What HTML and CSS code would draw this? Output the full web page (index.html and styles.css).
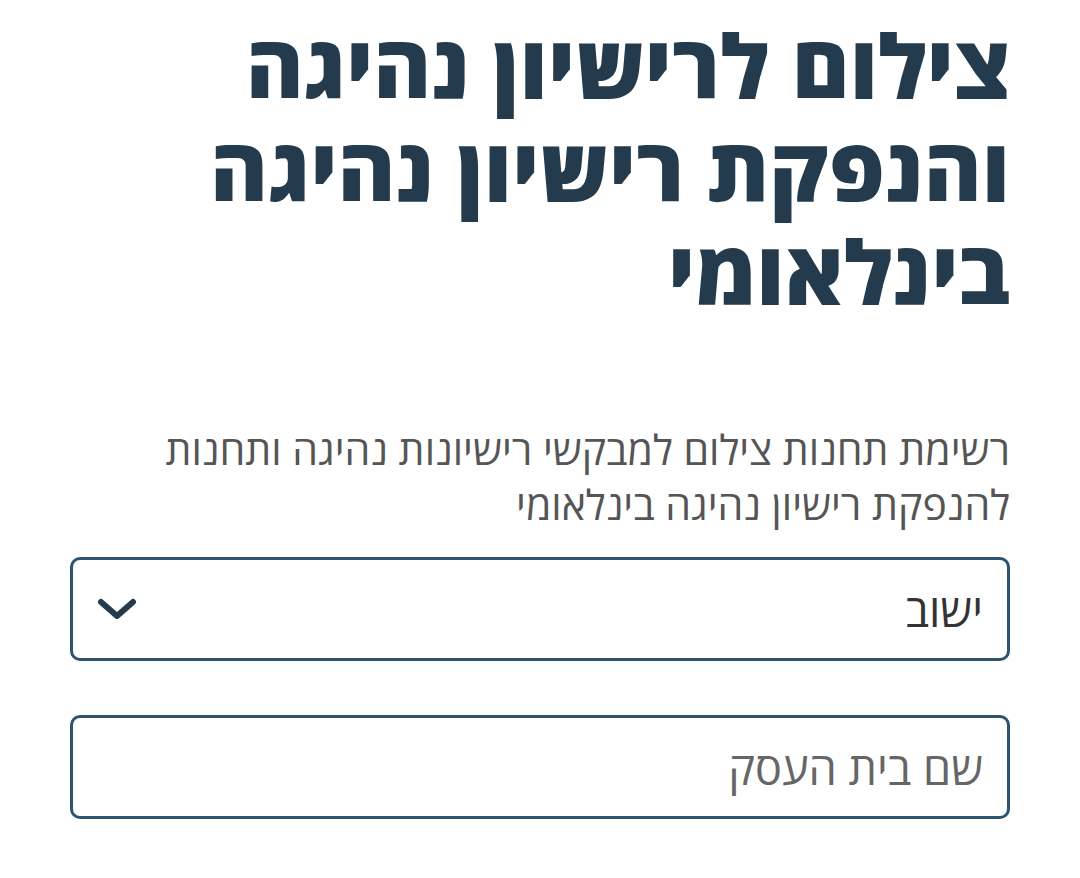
FILE: index.html
```html
<!DOCTYPE html>
<html lang="he" dir="rtl">

<head>
    <meta charset="UTF-8">
    <meta name="viewport" content="width=device-width, initial-scale=1.0">
    <title>צילום לרישיון נהיגה</title>
    <link rel="stylesheet" href="styles.css">
</head>

<body>
    <div class="page">
        <h1 class="title">צילום לרישיון נהיגה והנפקת רישיון נהיגה בינלאומי</h1>
        <p class="intro">רשימת תחנות צילום למבקשי רישיונות נהיגה ותחנות להנפקת רישיון נהיגה בינלאומי</p>
        <form class="search-form">
            <div class="field select-field">
                <span class="field-text">ישוב</span>
                <svg class="chevron" width="40" height="24" viewBox="0 0 40 24">
                    <path d="M4 5 L20 19 L36 5" fill="none" stroke="#243b4d" stroke-width="6" stroke-linecap="round" stroke-linejoin="round"/>
                </svg>
            </div>
            <div class="field">
                <input type="text" class="field-input" placeholder="שם בית העסק">
            </div>
        </form>
    </div>
</body>

</html>
```

FILE: styles.css
```css
body {
    margin: 0;
    background-color: #fff;
    font-family: "Open Sans", "DejaVu Sans", sans-serif;
}

.page {
    padding: 14px 70px 0 70px;
}

.title {
    margin: 0;
    padding-left: 100px;
    font-size: 88px;
    font-weight: 800;
    line-height: 103px;
    color: #243b4d;
}

.intro {
    margin: 99px 0 0 0;
    padding-left: 40px;
    font-size: 41px;
    line-height: 55px;
    color: #555;
}

.search-form {
    margin-top: 25px;
    display: flex;
    flex-direction: column;
    gap: 54px;
}

.field {
    height: 104px;
    box-sizing: border-box;
    border: 3px solid #2c5470;
    border-radius: 10px;
    display: flex;
    align-items: center;
    padding: 0 24px;
}

.select-field {
    justify-content: space-between;
}

.field-text {
    font-size: 45px;
    color: #333;
}

.field-input {
    border: none;
    outline: none;
    width: 100%;
    font-family: inherit;
    font-size: 45px;
    color: #333;
    padding: 0;
    background: transparent;
}

.field-input::placeholder {
    color: #666;
}
```
